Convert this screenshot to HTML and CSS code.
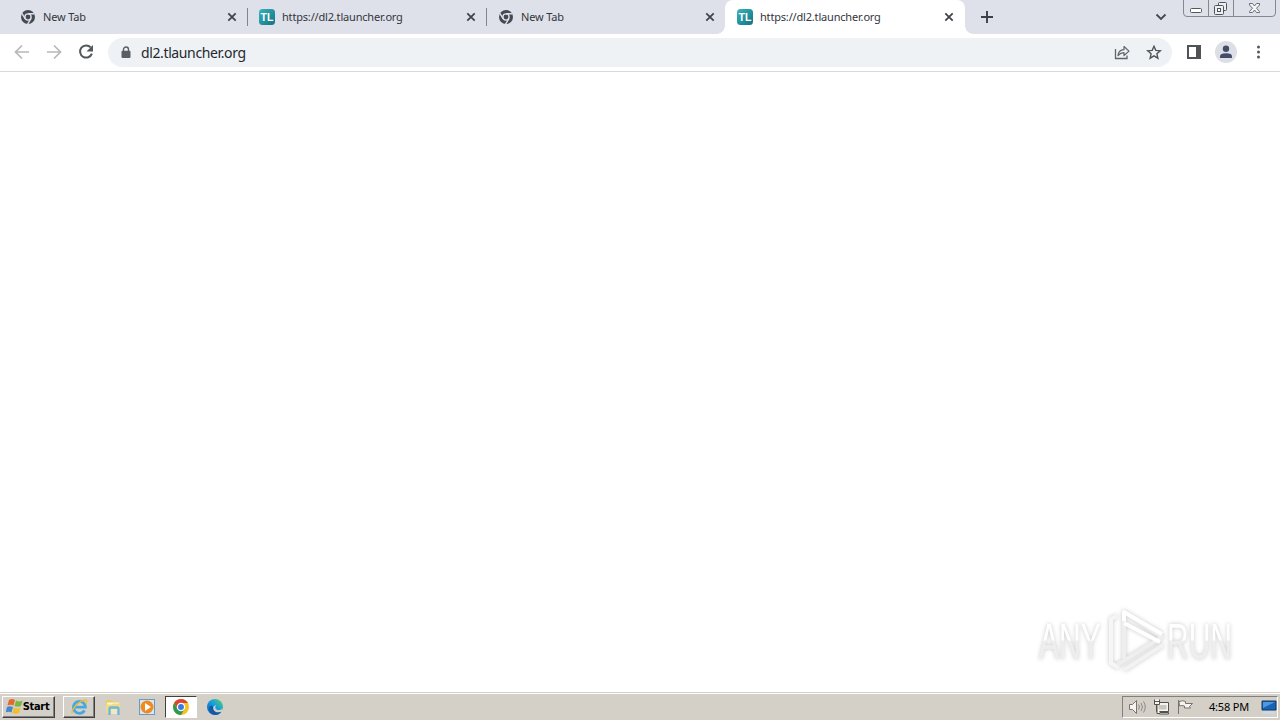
FILE: index.html
```html
<!DOCTYPE html>
<html lang="en">
  <head>
    <meta charset="UTF-8">
    <title>dl2.tlauncher.org</title>
    <link rel="stylesheet" href="styles.css">
  </head>
  <body>
    <!-- shared symbols -->
    <svg class="defs" width="0" height="0">
      <defs>
        <linearGradient id="teal" x2="1" y2="1">
          <stop offset="0" stop-color="#38b3bd"/>
          <stop offset="1" stop-color="#147383"/>
        </linearGradient>
        <linearGradient id="edgefill" x1="0" y1="1" x2="1" y2="0">
          <stop offset="0" stop-color="#0860b8"/>
          <stop offset=".55" stop-color="#159fdd"/>
          <stop offset="1" stop-color="#5fd65a"/>
        </linearGradient>
        <linearGradient id="half" gradientUnits="userSpaceOnUse" x1="0" y1="-38" x2="0" y2="0">
          <stop offset=".5" stop-color="#fff"/>
          <stop offset=".53" stop-color="#eee"/>
        </linearGradient>
        <symbol id="chrome-grey" viewBox="0 0 16 16">
          <circle cx="8" cy="8" r="7" fill="#454950"/>
          <circle cx="8" cy="8" r="3.1" fill="#454950" stroke="#dee1e9" stroke-width="1.4"/>
          <path d="M8 4.7h6.4M5.1 9.7L1.9 4.3M10.9 9.7l-3.3 5.4" stroke="#dee1e9" stroke-width="1.4"/>
        </symbol>
        <symbol id="close" viewBox="0 0 10 10">
          <path d="M1.3 1.3l7.4 7.4M8.7 1.3L1.3 8.7" stroke="#41454b" stroke-width="1.8"/>
        </symbol>
      </defs>
    </svg>

    <div class="tabs">
      <div class="tab">
        <svg class="favicon"><use href="#chrome-grey"/></svg>
        <span class="title">New Tab</span>
        <svg class="close"><use href="#close"/></svg>
      </div>
      <div class="tab">
        <svg class="favicon" viewBox="0 0 16 16">
          <rect width="16" height="16" rx="3.5" fill="url(#teal)"/>
          <text class="tl" x="1.500" y="12.300">TL</text>
        </svg>
        <span class="title">https://dl2.tlauncher.org</span>
        <svg class="close"><use href="#close"/></svg>
      </div>
      <div class="tab last">
        <svg class="favicon"><use href="#chrome-grey"/></svg>
        <span class="title">New Tab</span>
        <svg class="close"><use href="#close"/></svg>
      </div>
      <div class="tab active">
        <svg class="favicon" viewBox="0 0 16 16">
          <rect width="16" height="16" rx="3.5" fill="url(#teal)"/>
          <text class="tl" x="1.500" y="12.300">TL</text>
        </svg>
        <span class="title">https://dl2.tlauncher.org</span>
        <svg class="close"><use href="#close"/></svg>
      </div>
      <svg class="plus" width="12" height="12" viewBox="0 0 12 12"><path d="M6 0v12M0 6h12" stroke="#3c4046" stroke-width="1.9"/></svg>
      <svg class="chevron" width="12" height="8" viewBox="0 0 12 8"><path d="M1.5 1.5L6 6l4.5-4.5" fill="none" stroke="#44484e" stroke-width="1.8"/></svg>
      <svg class="winbtns" width="94" height="18" viewBox="0 0 94 18">
        <path d="M.5 0v13q0 3.5 3.5 3.5h85q3.500 0 3.500-3.500V0M25.500 0v16M50.500 0v16" fill="none" stroke="#85888f"/>
        <rect x="7.500" y="8.500" width="11" height="4" rx="1" fill="#fff" stroke="#55585e"/>
        <rect x="35.500" y="2.500" width="8" height="8" rx="1" fill="#eceef2" stroke="#505359"/>
        <rect x="31.500" y="5.500" width="9" height="9" rx="1" fill="#eceef2" stroke="#505359"/>
        <rect x="34.500" y="8.500" width="3" height="3" fill="#fff" stroke="#505359"/>
        <path d="M66.500 3.500h3l2 2.500 2-2.500h3v1.500l-3 3.200 3 3.300v1h-3l-2-2.500-2 2.500h-3v-1l3-3.300-3-3.200z" fill="#f5f6f8" stroke="#696c72"/>
      </svg>
    </div>

    <div class="toolbar">
      <svg width="108" height="37" viewBox="0 0 108 37">
        <path d="M29 18H16M22 11.500L15.500 18l6.500 6.500M47 18h13M54 11.500l6.500 6.500-6.500 6.500" fill="none" stroke="#b6b8bb" stroke-width="1.7"/>
        <path d="M90.700 13.400A6.100 6.100 0 1 0 91.900 19.600" fill="none" stroke="#54575b" stroke-width="2"/>
        <path d="M93 11v6.500h-6.500z" fill="#54575b"/>
      </svg>
      <div class="omnibox">
        <svg class="lock" width="10" height="13" viewBox="0 0 10 13">
          <path d="M2.500 6V3.500a2.500 2.500 0 0 1 5 0V6" fill="none" stroke="#5b5e63" stroke-width="1.4"/>
          <rect x=".5" y="4.800" width="9" height="7.200" rx="1" fill="#5b5e63"/>
        </svg>
        <span class="url">dl2.tlauncher.org</span>
        <svg width="16" height="16" viewBox="0 0 16 16">
          <path d="M1.500 4v9.500h11.500v-3" fill="none" stroke="#606368" stroke-width="1.300"/>
          <path d="M4 10.500q.5-5.500 6-5.800V1.500l5 4.600-5 4.400V7.700q-3.500 0-6 2.800z" fill="none" stroke="#606368" stroke-width="1.200" stroke-linejoin="round"/>
        </svg>
        <svg width="16" height="16" viewBox="0 0 16 16">
          <path d="M8 1.300l1.800 4.100 4.500.4-3.400 3 1 4.400L8 10.900l-3.900 2.300 1-4.400-3.400-3 4.500-.4z" fill="none" stroke="#505358" stroke-width="1.400"/>
        </svg>
      </div>
      <svg width="108" height="37" viewBox="0 0 108 37">
        <path d="M16 12h11v12H16z" fill="none" stroke="#505256" stroke-width="2"/>
        <path d="M24 11h5v14h-5z" fill="#505256"/>
        <circle cx="54" cy="18" r="11" fill="#dcdfe5"/>
        <circle cx="54" cy="14.800" r="3.200" fill="#424e69"/>
        <path d="M48 24v-1.500q0-3.300 6-3.300t6 3.300V24z" fill="#424e69"/>
        <g fill="#54575b"><circle cx="86.500" cy="13" r="1.500"/><circle cx="86.500" cy="18" r="1.500"/><circle cx="86.500" cy="23" r="1.500"/></g>
      </svg>
    </div>

    <div class="page">
      <svg class="watermark" width="210" height="72" viewBox="0 0 210 72">
        <text transform="translate(9 54) scale(.6 1)">ANY</text>
        <text transform="translate(137 54) scale(.6 1)">RUN</text>
        <g fill="none" stroke-width="4" stroke-linejoin="round">
          <path d="M87 11l-6 3v44l8 5" stroke="#f6f6f6"/>
          <path d="M94 54V7l38 25-45 28" stroke="#eee"/>
          <path d="M94 16V7l38 22M94 18l36 19" stroke="#fff"/>
          <path d="M94 65l39-25" stroke="#f2f2f2"/>
        </g>
      </svg>
    </div>

    <div class="taskbar">
      <div class="task start">
        <svg width="17" height="17" viewBox="0 0 17 17">
          <path d="M3 2q3-2 6 0L7.500 7.500Q5 6 1.500 7.500z" fill="#e8682b"/>
          <path d="M10 2.500q3 2 6.500 0L15 8q-3 1.500-6.500 0z" fill="#77b843"/>
          <path d="M1 9q3-1.500 6 0l-1.500 5.500Q3 13-.5 14.500z" fill="#4289cf"/>
          <path d="M8 9.500q3 2 6.500 0L13 15q-3 1.500-6.500 0z" fill="#f4bd28"/>
        </svg>
        <b>Start</b>
      </div>
      <div class="task raised">
        <svg width="18" height="18" viewBox="0 0 18 18">
          <path d="M14.500 12.500a6 6 0 1 1 .9-3.300H5" fill="none" stroke="#47a8df" stroke-width="2.800"/>
          <path d="M2.500 15.500C-.5 13 9 2.500 15.500 2q2 .5.500 4" fill="none" stroke="#ecbd35" stroke-width="1.400"/>
        </svg>
      </div>
      <div class="task">
        <svg width="18" height="18" viewBox="0 0 18 18">
          <path d="M2 2h5l1 1.500h6V14H2z" fill="#e9cc66"/>
          <path d="M3 4.500h12V8H3z" fill="#fff6cf"/>
          <path d="M2 6.500h6l1-1h7V15H2z" fill="#f0da82"/>
          <path d="M5.500 17v-6q0-1.500 1.500-1.500h6q1.500 0 1.500 1.500v6" fill="none" stroke="#6db7df" stroke-width="2.300"/>
          <path d="M7 11h6v5H7z" fill="#efe8c4"/>
        </svg>
      </div>
      <div class="task">
        <svg width="18" height="18" viewBox="0 0 18 18">
          <rect x="1.500" y="1.500" width="15" height="15" fill="#d7e8f4" stroke="#659bc4"/>
          <circle cx="9" cy="9" r="6.500" fill="#ef8a20"/>
          <path d="M7 5l6 4-6 4z" fill="#fff"/>
        </svg>
      </div>
      <div class="task pressed">
        <svg width="18" height="18" viewBox="0 0 18 18">
          <circle cx="9" cy="9" r="8" fill="#f3c325"/>
          <path d="M2.100 5A8 8 0 0 1 15.900 5H9L5.500 11z" fill="#dc4435"/>
          <path d="M2.100 5A8 8 0 0 0 9 17l3.500-6H5.500z" fill="#2b9b50"/>
          <circle cx="9" cy="9" r="3.600" fill="#3a7ae0" stroke="#fff" stroke-width="1.300"/>
        </svg>
      </div>
      <div class="task">
        <svg width="18" height="18" viewBox="0 0 18 18">
          <circle cx="9" cy="9" r="8" fill="url(#edgefill)"/>
          <path d="M7 8q-1 6 8.500 5.500Q13 17 9 17 3 16 3 11q0-4 4-3z" fill="#1558a5"/>
          <path d="M10 7q-2 4 1.500 5 3 .6 5-1.500v3q-4 1.500-7 .3Q6.500 12 7.500 8.500z" fill="#d4d0c8"/>
        </svg>
      </div>
      <div class="tray">
        <svg width="76" height="20" viewBox="0 0 76 20">
          <g fill="#f5f4f1" stroke="#77746f">
            <path d="M6.500 7.500h3l4-4v13l-4-4h-3z"/>
            <path d="M15.500 7.500q2 2.500 0 5M18 6q3 4 0 8M20.500 4.500q3.500 5.500 0 11" fill="none" stroke="#8d8984"/>
            <path d="M33.500 5.500h12v9h-12zM36.500 15.500h9v1.500h-9z" stroke="#55524e"/>
            <path d="M35.500 8h8v4.500h-8z" fill="#c9c6c0" stroke="none"/>
            <path d="M31.500 2.500v5h5v-5M31.500 4.500h5M34 7.500v9h3" stroke="#55524e"/>
            <path d="M55.500 3v14M56 4.500q4-1.500 6.500 0v2h7l-3 3 1 1.500h-6v-2q-3-1-5 0z"/>
          </g>
        </svg>
        <span class="clock">4:58 PM</span>
        <svg width="16" height="14" viewBox="0 0 16 14">
          <path d="M1 1h14v9H1z" fill="#1763b7" stroke="#17365f"/>
          <path d="M2 2h12L2 8z" fill="#4e98df"/>
          <path d="M2 12.500h12" stroke="#c7dced" stroke-width="2"/>
        </svg>
      </div>
    </div>
  </body>
</html>
```
FILE: styles.css
```css
* {
  box-sizing: border-box;
}
body {
  margin: 0;
  height: 720px;
  overflow: hidden;
  display: flex;
  flex-direction: column;
  background: #fff;
  font-family: "Noto Sans", "DejaVu Sans", sans-serif;
}
svg {
  display: block;
  flex: none;
}
.defs {
  position: absolute;
}

/* tab strip */
.tabs {
  height: 34px;
  flex: none;
  display: flex;
  background: #dee1e9;
  padding-left: 9px;
}
.tab {
  width: 239px;
  height: 34px;
  flex: none;
  display: flex;
  align-items: center;
  padding: 0 11px;
  position: relative;
  background: linear-gradient(#80848b, #80848b) right 8px / 1px 18px no-repeat;
}
.tab.last {
  width: 238px;
  padding-right: 10px;
  background: none;
}
.tab.active {
  width: 240px;
  padding-left: 12px;
  background: #fff;
  border-radius: 8px 8px 0 0;
}
.active::before, .active::after {
  content: "";
  position: absolute;
  bottom: 0;
  width: 8px;
  height: 8px;
}
.active::before {
  left: -8px;
  background: radial-gradient(circle at 0 0, transparent 7.5px, #fff 8px);
}
.active::after {
  right: -8px;
  background: radial-gradient(circle at 100% 0, transparent 7.5px, #fff 8px);
}
.favicon {
  width: 16px;
  height: 16px;
}
.tl {
  fill: #fff;
  font: bold 10.5px "Liberation Sans", sans-serif;
}
.title {
  margin-left: 7px;
  flex: 1;
  font-size: 11px;
  line-height: 16px;
  letter-spacing: -.18px;
  color: #33363c;
  white-space: nowrap;
}
.close {
  width: 10px;
  height: 10px;
}
.plus {
  margin: 11px 0 0 16px;
}
.chevron {
  margin: 13px 0 0 auto;
}
.winbtns {
  margin: 0 3px 0 16px;
}

/* toolbar */
.toolbar {
  height: 38px;
  flex: none;
  display: flex;
  border-bottom: 1px solid #d7d9dc;
}
.omnibox {
  flex: 1;
  height: 29px;
  margin-top: 4px;
  display: flex;
  align-items: center;
  gap: 16px;
  padding: 0 10px 0 13px;
  border-radius: 15px;
  background: #eff2f5;
}
.url {
  flex: 1;
  margin-left: -6px;
  font-size: 14px;
  line-height: 20px;
  letter-spacing: -.38px;
  color: #25282c;
}

/* page */
.page {
  flex: 1;
  display: flex;
  justify-content: flex-end;
  align-items: flex-end;
  padding: 0 40px 15px 0;
}
.watermark {
  overflow: visible;
  filter: drop-shadow(0 0 2px rgba(0, 0, 0, .22));
}
.watermark text {
  font: 50px "Liberation Sans", sans-serif;
  fill: url(#half);
}

/* taskbar */
.taskbar {
  height: 28px;
  flex: none;
  display: flex;
  align-items: center;
  gap: 2px;
  padding: 0 2px 0 2px;
  border-top: 1px solid #d4d0c8;
  background: linear-gradient(#fff 1px, #d4d0c8 1px);
}
.task {
  width: 32px;
  height: 22px;
  display: flex;
  align-items: center;
  justify-content: center;
}
.start, .raised {
  border: 1px solid;
  border-color: #fff #404040 #404040 #fff;
  box-shadow: inset -1px -1px #808080;
}
.start {
  width: 53px;
  margin-right: 6px;
  padding-right: 2px;
  font: bold 11px "DejaVu Sans Condensed", "DejaVu Sans", sans-serif;
  letter-spacing: -.3px;
}
.pressed {
  border: 1px solid;
  border-color: #404040 #fff #fff #404040;
  background: #fff;
}
.tray {
  width: 156px;
  height: 22px;
  margin-left: auto;
  display: flex;
  align-items: center;
  border: 1px solid;
  border-color: #808080 #fff #fff #808080;
}
.clock {
  flex: 1;
  margin-left: 10px;
  font-size: 11px;
  letter-spacing: -.2px;
  white-space: nowrap;
  color: #000;
}
```
